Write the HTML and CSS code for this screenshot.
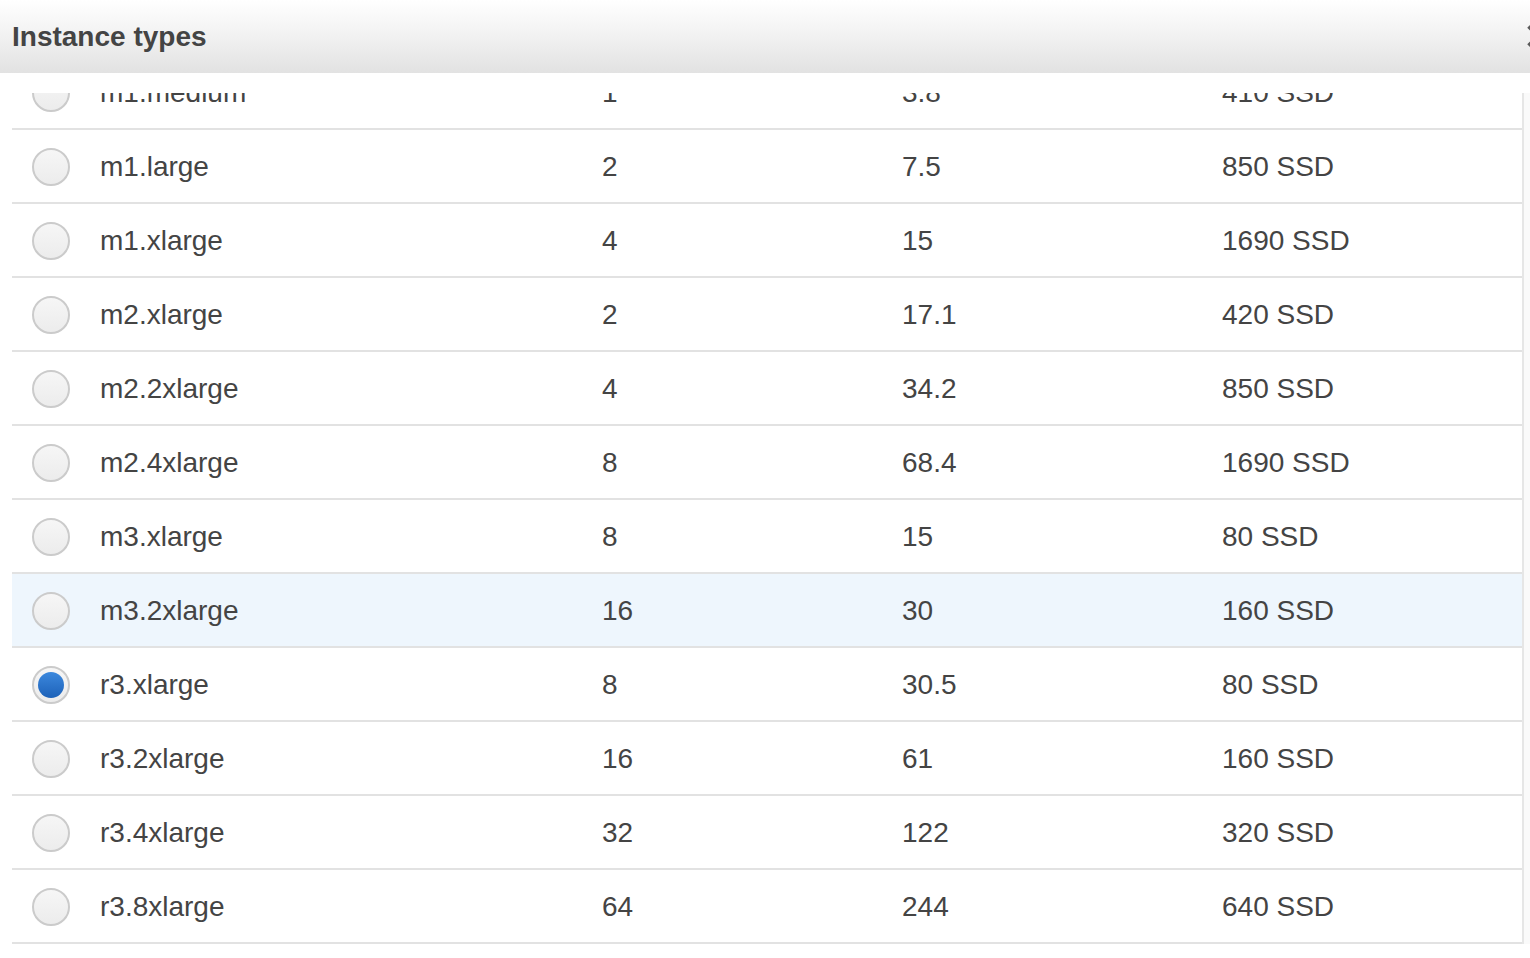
FILE: index.html
```html
<!DOCTYPE html>
<html>
<head>
<meta charset="utf-8">
<link rel="stylesheet" href="styles.css">
</head>
<body>
<div class="modal">
  <div class="modal-header">
    <h1 class="title">Instance types</h1>
    <svg class="close" width="26" height="26" viewBox="0 0 26 26"><path d="M3 3 L23 23 M23 3 L3 23" stroke="#5a5a5a" stroke-width="5" stroke-linecap="butt"/></svg>
  </div>
  <div class="modal-body">
    <div class="scroller">
      <div class="table">
        <div class="row"><span class="radio"></span><span>m1.medium</span><span>1</span><span>3.8</span><span>410 SSD</span></div>
        <div class="row"><span class="radio"></span><span>m1.large</span><span>2</span><span>7.5</span><span>850 SSD</span></div>
        <div class="row"><span class="radio"></span><span>m1.xlarge</span><span>4</span><span>15</span><span>1690 SSD</span></div>
        <div class="row"><span class="radio"></span><span>m2.xlarge</span><span>2</span><span>17.1</span><span>420 SSD</span></div>
        <div class="row"><span class="radio"></span><span>m2.2xlarge</span><span>4</span><span>34.2</span><span>850 SSD</span></div>
        <div class="row"><span class="radio"></span><span>m2.4xlarge</span><span>8</span><span>68.4</span><span>1690 SSD</span></div>
        <div class="row"><span class="radio"></span><span>m3.xlarge</span><span>8</span><span>15</span><span>80 SSD</span></div>
        <div class="row hover"><span class="radio"></span><span>m3.2xlarge</span><span>16</span><span>30</span><span>160 SSD</span></div>
        <div class="row"><span class="radio checked"></span><span>r3.xlarge</span><span>8</span><span>30.5</span><span>80 SSD</span></div>
        <div class="row"><span class="radio"></span><span>r3.2xlarge</span><span>16</span><span>61</span><span>160 SSD</span></div>
        <div class="row"><span class="radio"></span><span>r3.4xlarge</span><span>32</span><span>122</span><span>320 SSD</span></div>
        <div class="row"><span class="radio"></span><span>r3.8xlarge</span><span>64</span><span>244</span><span>640 SSD</span></div>
      </div>
    </div>
  </div>
</div>
</body>
</html>
```
FILE: styles.css
```css
html, body {
  margin: 0;
  padding: 0;
  background: #fff;
}
body {
  font-family: "Liberation Sans", Arial, Helvetica, sans-serif;
  color: #444;
  width: 1530px;
  height: 958px;
  overflow: hidden;
}
.modal {
  display: flex;
  flex-direction: column;
  height: 958px;
}
.modal-header {
  height: 73px;
  flex: none;
  display: flex;
  align-items: center;
  justify-content: space-between;
  padding-left: 12px;
  background: linear-gradient(to bottom, #ffffff 0%, #f4f4f4 40%, #e2e2e2 100%);
  overflow: hidden;
}
.title {
  margin: 0;
  font-size: 28px;
  font-weight: bold;
  color: #444;
  line-height: 1;
}
.close {
  flex: none;
  margin-right: -22px;
  margin-bottom: 2px;
}
.modal-body {
  padding: 20px 0 0 12px;
}
.scroller {
  height: 851px;
  overflow: hidden;
  display: flex;
}
.table {
  flex: 1;
  margin-top: -37px;
  border-right: 2px solid #e6e6e6;
  box-shadow: 6px 0 0 #fafafa;
  margin-right: 6px;
  align-self: flex-start;
}
.row {
  box-sizing: border-box;
  display: grid;
  grid-template-columns: 88px 502px 300px 320px 1fr;
  align-items: center;
  height: 74px;
  padding-top: 2px;
  border-bottom: 2px solid #e2e2e2;
  font-size: 28px;
  color: #444;
}
.row.hover {
  background: #eef6fd;
}
.radio {
  box-sizing: border-box;
  width: 38px;
  height: 38px;
  margin-left: 20px;
  border-radius: 50%;
  border: 2px solid #cbcbcb;
  background: linear-gradient(to bottom, #f6f6f6, #ececec);
  position: relative;
}
.radio.checked::after {
  content: "";
  position: absolute;
  left: 4px;
  top: 4px;
  width: 26px;
  height: 26px;
  border-radius: 50%;
  background: linear-gradient(to bottom, #3c88dd, #1d62b9);
}
```
